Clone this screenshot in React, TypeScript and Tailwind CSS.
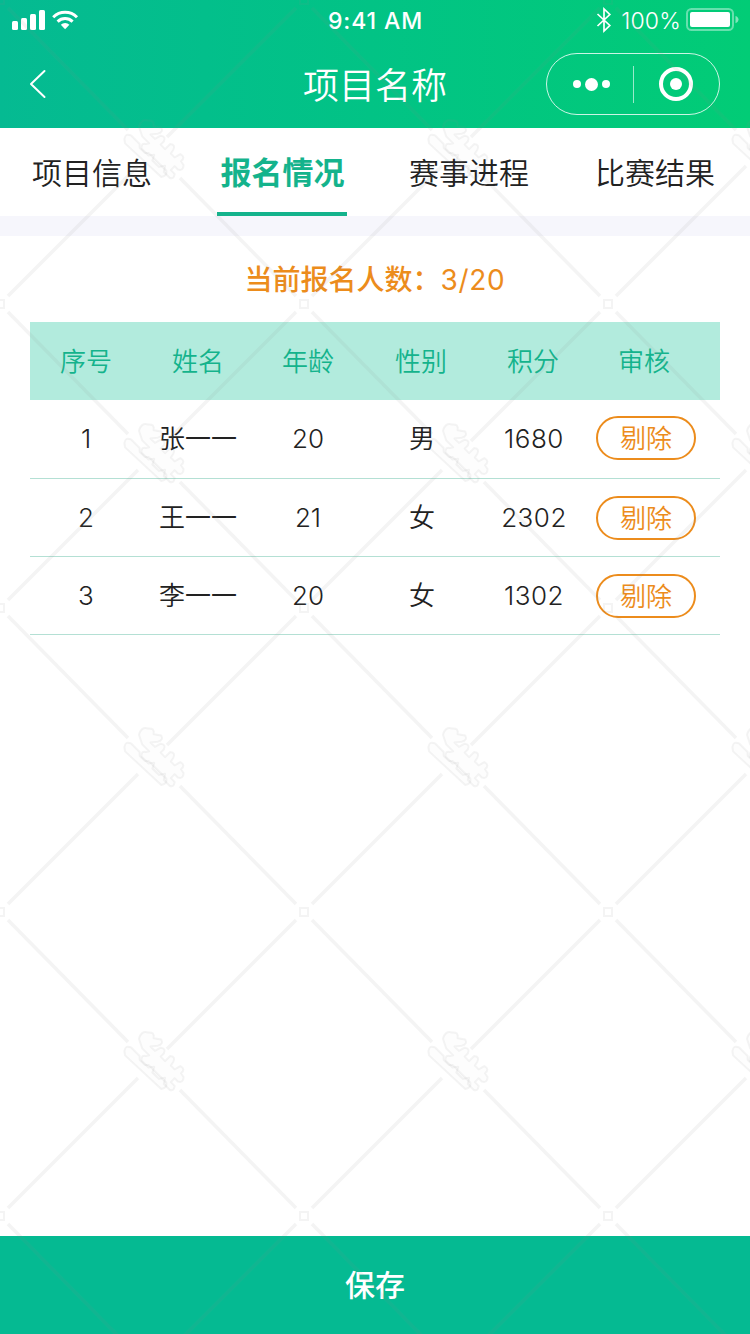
import React from 'react';

interface Player {
  no: number;
  name: string;
  age: number;
  gender: string;
  score: number;
}

const players: Player[] = [
  { no: 1, name: '张一一', age: 20, gender: '男', score: 1680 },
  { no: 2, name: '王一一', age: 21, gender: '女', score: 2302 },
  { no: 3, name: '李一一', age: 20, gender: '女', score: 1302 },
];

const columns = ['序号', '姓名', '年龄', '性别', '积分', '审核'];

const StatusBar = () => (
  <div className="h-10 grid grid-cols-[1fr_auto_1fr] items-center pl-3 pr-[11px] font-['Inter',sans-serif] text-[22px] text-white">
    <div className="flex items-center gap-[6px]">
      <svg width="34" height="22" viewBox="0 0 34 22" fill="currentColor">
        <rect x="0" y="12" width="6" height="9" rx="1.5" />
        <rect x="9" y="9" width="6" height="12" rx="1.5" />
        <rect x="18" y="5" width="6" height="16" rx="1.5" />
        <rect x="27" y="1" width="6" height="20" rx="1.5" />
      </svg>
      <svg width="27" height="22" viewBox="0 0 27 22" fill="none" stroke="currentColor" strokeWidth="3">
        <path d="M1.2 8.2a17 17 0 0 1 23.8 0" />
        <path d="M5.6 12.6a10.8 10.8 0 0 1 15 0" />
        <path d="M8.8 15.8a6.2 6.2 0 0 1 8.6 0l-4.3 4.4z" fill="currentColor" stroke="none" />
      </svg>
    </div>
    <span className="pt-0.5 text-[23px] font-medium tracking-[0.9px]">9:41 AM</span>
    <div className="flex items-center justify-end">
      <svg width="16" height="26" viewBox="0 0 16 26" fill="none" stroke="currentColor" strokeWidth="1.7">
        <path d="M1.5 7l12.3 11.5L8 24V2l5.8 5.5L1.5 19" />
      </svg>
      <span className="pt-0.5 ml-[9px] mr-[5px] text-[23px] font-[350] tracking-[0.2px]">100%</span>
      <svg width="53" height="24" viewBox="0 0 53 24">
        <rect x="1" y="1" width="46" height="21" rx="4.5" fill="none" stroke="#fff" strokeOpacity="0.4" strokeWidth="2" />
        <rect x="4" y="4" width="40" height="15" rx="2" fill="#fff" />
        <path d="M49.5 8c4 1.200 4 6 0 7.200z" fill="#fff" fillOpacity="0.5" />
      </svg>
    </div>
  </div>
);

const NavBar = () => (
  <div className="h-[88px] grid grid-cols-[1fr_auto_1fr] items-center pl-7 pr-[30px] text-white">
    <svg width="20" height="32" viewBox="0 0 20 32" fill="none" stroke="currentColor" strokeWidth="2" strokeLinecap="round" strokeLinejoin="round">
      <path d="M16.500 3L3 16l13.500 13" />
    </svg>
    <h1 className="pt-[3px] pl-0.5 text-[36px] font-[350] leading-none">项目名称</h1>
    <div className="w-[174px] h-[62px] justify-self-end flex items-center rounded-full border border-white/80">
      <div className="w-[86px] flex items-center justify-center gap-1 pl-0.5">
        <span className="w-2 h-2 rounded-full bg-white" />
        <span className="w-[13px] h-[13px] rounded-full bg-white" />
        <span className="w-2 h-2 rounded-full bg-white" />
      </div>
      <span className="w-px h-[37px] bg-white/60" />
      <div className="flex-1 flex items-center justify-center pr-0.5">
        <span className="w-[34px] h-[34px] rounded-full border-4 border-white flex items-center justify-center">
          <span className="w-3 h-3 rounded-full bg-white" />
        </span>
      </div>
    </div>
  </div>
);

const Tabs = () => (
  <nav className="h-[88px] bg-white flex pl-8 text-[30px] leading-[88px] font-[350] text-[#222] whitespace-nowrap">
    <button className="w-[120px] pt-px">项目信息</button>
    <button className="w-[130px] ml-[65px] border-b-4 border-[#14b38c] text-[31px] leading-[84px] pt-[3px] pl-px font-bold text-[#14b38c]">报名情况</button>
    <button className="w-[120px] ml-[62px] pt-px">赛事进程</button>
    <button className="w-[120px] ml-[66px] pt-px">比赛结果</button>
  </nav>
);

const PlayerTable = () => (
  <div className="mx-[30px] text-[26px] font-[350] text-[#222]">
    <div className="grid grid-cols-[112px_112px_108px_118px_106px_116px] items-center justify-items-center h-[78px] pb-px pt-0.5 bg-[#b2ebdd] text-[#14b38c]">
      {columns.map((c) => <span key={c}>{c}</span>)}
    </div>
    {players.map((p) => (
      <div key={p.no} className="grid grid-cols-[112px_112px_108px_120px_104px_120px] items-center justify-items-center h-[78px] first:h-[78px] nth-2:h-[79px] nth-2:pb-0.5 border-b border-[#b4e0d4]">
        <span>{p.no}</span>
        <span>{p.name}</span>
        <span>{p.age}</span>
        <span>{p.gender}</span>
        <span className="tracking-[0.5px]">{p.score}</span>
        <button className="w-[100px] h-11 rounded-full border-2 border-[#ec8c1c] text-[#ec8c1c] leading-[41px]">剔除</button>
      </div>
    ))}
  </div>
);

// Repeating diagonal lattice, laid over the whole page
const Watermark = () => (
  <svg className="absolute inset-0 pointer-events-none" width="750" height="1334">
    <defs>
      <pattern id="lattice" width="304" height="304" patternUnits="userSpaceOnUse">
        <g fill="none" stroke="#808080" strokeOpacity="0.09">
          <path strokeWidth="3.5" d="M8 8L128 130M180 178L296 296M296 8L167 137M138 166L8 296" />
          <path strokeWidth="2" d="M0 4h4v-4M300 0v4h4M0 300h4v4M300 304v-4h4" />
          <g strokeWidth="2.2" strokeLinejoin="round" fill="#808080" fillOpacity="0.02" transform="translate(153 151) rotate(45) scale(.9)">
            <path d="M-30-8q-5-8 2-12q5-6 9 0l7-5q6 2 2 8l-5 6h7l2-7q5-4 7 2v5h7v-8q5-4 7 2l1 5h6l2-7q7-2 6 5l5 1q5 5-1 8h-5v6h6q4 5-1 7h-9l-4-6-4 6h-10l-3-6-4 5h-11q-5-4 0-7l2-3h-11z" />
            <path d="M-32 13q-4-6 3-8h13l3 3h8l3-3h28q5 3 1 9l-55 2z" />
          </g>
        </g>
      </pattern>
    </defs>
    <rect width="750" height="1334" fill="url(#lattice)" />
  </svg>
);

const App: React.FC = () => {
  return (
    <div className="relative w-[750px] h-[1334px] flex flex-col overflow-hidden bg-white font-['Inter','Noto_Sans_CJK_SC',sans-serif]">
      <header className="h-32 bg-linear-to-r from-[#05ba92] to-[#02cc76]">
        <StatusBar />
        <NavBar />
      </header>
      <Tabs />
      <div className="h-5 bg-[#f6f6fc]" />
      <main className="flex-1">
        <p className="h-[86px] leading-[88px] text-center text-[28px] font-medium text-[#ec8c1c]">
          当前报名人数：<span className="font-normal tracking-[0.7px]">3/20</span>
        </p>
        <PlayerTable />
      </main>
      <button className="h-[98px] pt-px bg-[#05ba92] text-white text-[30px] font-medium">保存</button>
      <Watermark />
    </div>
  );
};

export default App;
